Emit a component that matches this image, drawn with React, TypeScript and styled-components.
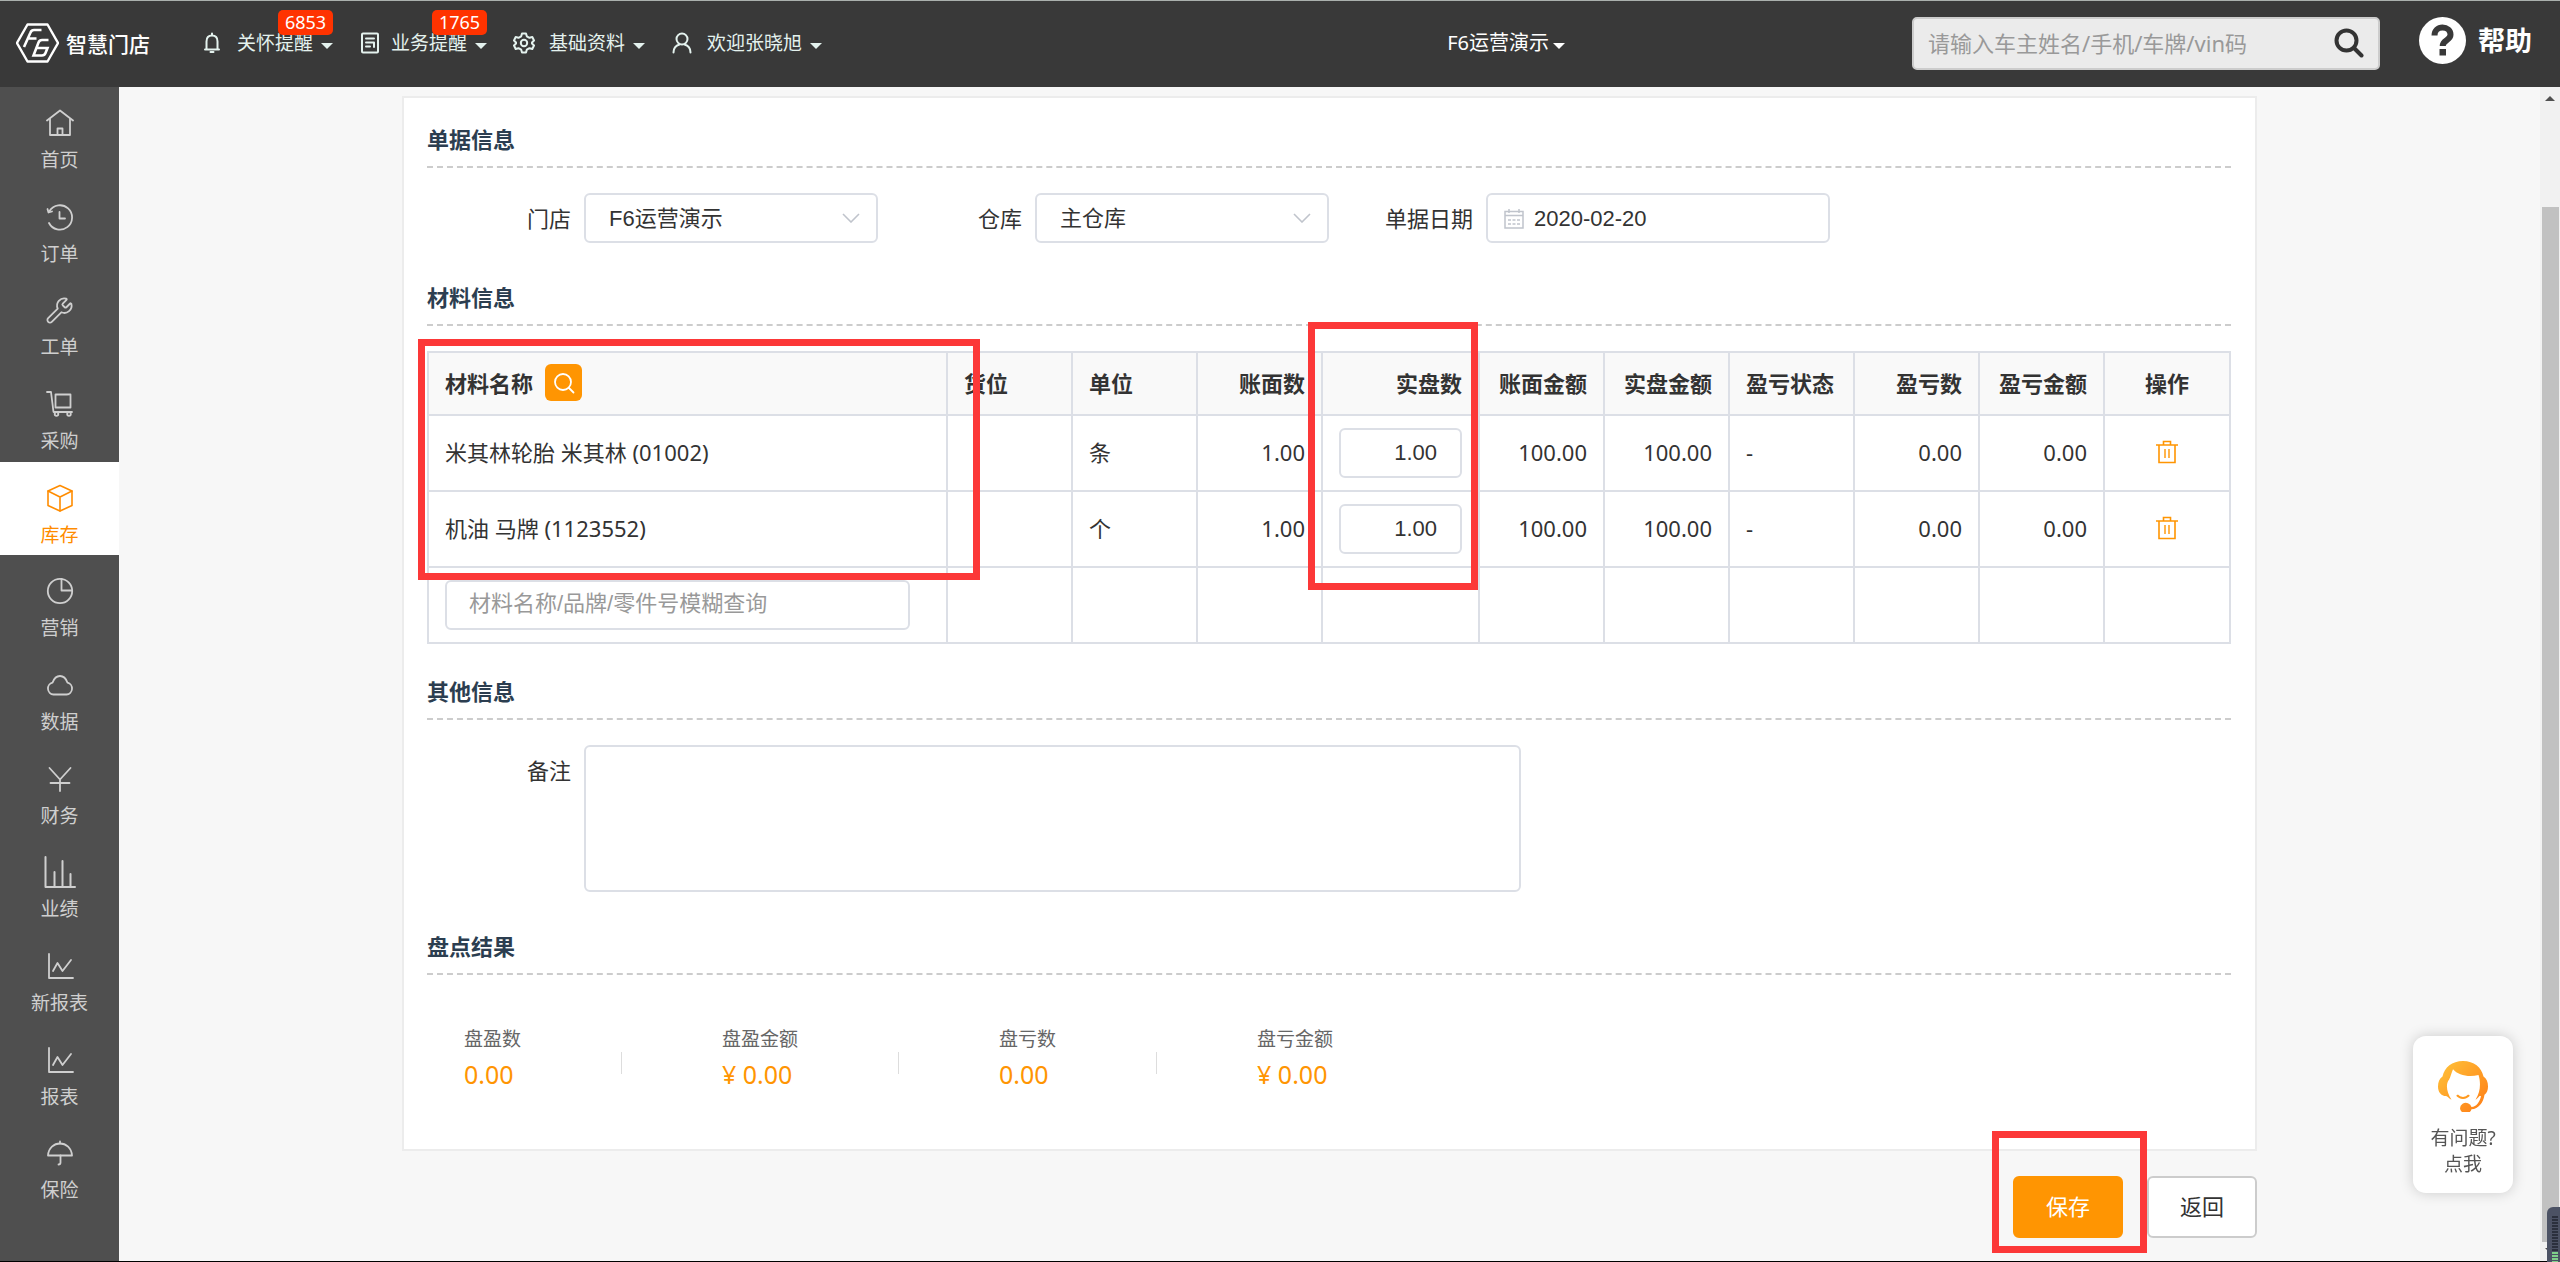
import React from "react";
import styled, { createGlobalStyle, css } from "styled-components";
import { Wrench } from "lucide-react";

const SANS = `"Noto Sans", "Noto Sans CJK SC", sans-serif`;
const ARIAL = `"Liberation Sans", "Noto Sans CJK SC", sans-serif`;
const ORANGE = "#ff9502";
const LINE = "#dcdfe6";

const GlobalStyle = createGlobalStyle`
  *, *::before, *::after { box-sizing: border-box; }
  body { margin: 0; background: #f7f7f7; overflow: hidden; }
  button, input, select, textarea { font: inherit; color: inherit; margin: 0; }
  svg { display: block; flex: none; }
`;

const Shell = styled.div`
  display: flex;
  flex-direction: column;
  height: 100vh;
  border-top: 1px solid #aab0ad;
  border-bottom: 1px solid #000;
  background: #f7f7f7;
  font-family: ${SANS};
  font-size: 22px;
  line-height: 32px;
  color: #333;
`;

/* ---------- top bar ---------- */

const TopBar = styled.header`
  display: flex;
  align-items: center;
  flex: none;
  height: 86px;
  padding: 0 28px 2px 16px;
  background: #393939;
  color: #fff;
`;

const Brand = styled.a`
  display: flex;
  align-items: center;
  gap: 7px;
  width: 185px;
  color: #fff;
  text-decoration: none;
  font-size: 21px;
  font-weight: 500;
  font-family: "Noto Sans CJK SC", sans-serif;
`;

const TopNav = styled.nav`
  display: flex;
  align-items: center;
  gap: 26px;
  flex: 1;
`;

const TopNavButton = styled.button<{ $tight?: boolean }>`
  display: flex;
  align-items: center;
  gap: 8px;
  padding: 0;
  border: 0;
  background: none;
  color: #e4f2ee;
  font-size: 19px;
  line-height: 28px;
  position: relative;
  cursor: pointer;

  > svg {
    margin-right: ${(p) => (p.$tight ? "2px" : "6px")};
  }
`;

const Caret = styled.span`
  margin-top: 6px;
  border: 6px solid transparent;
  border-top-color: currentColor;
  border-bottom: 0;
`;

const CountBadge = styled.span`
  position: absolute;
  right: 0;
  bottom: 22px;
  width: 55px;
  border-radius: 5px;
  background: #ff3300;
  color: #fff;
  font-size: 18px;
  line-height: 25px;
  text-align: center;
`;

const StoreSwitch = styled.button`
  display: flex;
  align-items: center;
  gap: 4px;
  margin-right: 347px;
  padding: 0;
  border: 0;
  background: none;
  color: #fff;
  font-size: 20px;
  line-height: 28px;
  cursor: pointer;
`;

const SearchBox = styled.form`
  display: flex;
  align-items: center;
  width: 468px;
  height: 53px;
  padding: 0 14px;
  border: 2px solid #ccc;
  border-radius: 5px;
  background: #ebebeb;
  color: #333;
`;

const SearchInput = styled.input`
  flex: 1;
  min-width: 0;
  padding: 0;
  border: 0;
  outline: 0;
  background: none;
  &::placeholder { color: #999; opacity: 1; }
`;

const IconButton = styled.button`
  padding: 0;
  border: 0;
  background: none;
  color: inherit;
  cursor: pointer;
`;

const HelpLink = styled.a`
  display: flex;
  align-items: center;
  gap: 12px;
  margin-left: 39px;
  padding-bottom: 5px;
  color: #fff;
  font-size: 27px;
  font-weight: 700;
  text-decoration: none;
`;

/* ---------- side menu ---------- */

const Body = styled.div`
  display: flex;
  flex: 1;
  min-height: 0;
`;

const SideMenu = styled.nav`
  display: flex;
  flex-direction: column;
  flex: none;
  width: 119px;
  padding-bottom: 50px;
  background: #4f4f4f;
`;

const SideLink = styled.a<{ $active?: boolean }>`
  display: flex;
  flex-direction: column;
  align-items: center;
  gap: 9px;
  flex: 1;
  padding-top: 22px;
  background: ${(p) => (p.$active ? "#fff" : "none")};
  color: ${(p) => (p.$active ? "#ff8c00" : "#cfcfcf")};
  font-size: 19px;
  line-height: 28px;
  text-decoration: none;
`;

const SideIcon = styled.span`
  display: flex;
  align-items: center;
  justify-content: center;
  height: 28px;
`;

/* ---------- form card ---------- */

const Main = styled.main`
  flex: 1;
  min-width: 0;
  padding: 9px 283px 0;
  overflow: hidden;
`;

const Card = styled.div`
  padding: 26px 24px 56px 23px;
  border: 2px solid #ececec;
  background: #fff;
`;

const Section = styled.section<{ $close?: boolean }>`
  margin-bottom: ${(p) => (p.$close ? "32px" : "39px")};
  &:last-child { margin-bottom: 0; }
`;

const SectionTitle = styled.h2`
  margin: 0 0 25px;
  padding-bottom: 12px;
  border-bottom: 2px dashed #ccc;
  color: #2c3e50;
  font-size: 22px;
  line-height: 30px;
  font-weight: 700;
`;

const FieldRow = styled.div`
  display: flex;
  flex-wrap: wrap;
`;

const FieldLabel = styled.label`
  width: 144px;
  margin-right: 13px;
  line-height: 50px;
  text-align: right;
`;

const control = css`
  height: 50px;
  border: 2px solid ${LINE};
  border-radius: 6px;
  background: #fff;
  outline: 0;
`;

const SelectWrap = styled.span`
  display: grid;
  align-items: center;
  width: 294px;
  > * { grid-area: 1 / 1; }
  > svg { justify-self: end; margin-right: 18px; pointer-events: none; }
`;

const Select = styled.select`
  ${control}
  appearance: none;
  width: 100%;
  padding: 2px 40px 0 23px;
  font-family: ${ARIAL};
`;

const DateWrap = styled.span`
  display: flex;
  align-items: center;
  gap: 10px;
  width: 344px;
  padding: 2px 0 0 16px;
  ${control}
`;

const DateInput = styled.input`
  flex: 1;
  min-width: 0;
  padding: 0;
  border: 0;
  outline: 0;
  background: none;
  font-family: ${ARIAL};
`;

const Remark = styled.textarea`
  width: 937px;
  height: 147px;
  padding: 8px 22px;
  border: 2px solid ${LINE};
  border-radius: 6px;
  outline: 0;
  resize: none;
`;

/* ---------- material table ---------- */

const TableWrap = styled.div`
  position: relative;
`;

const Table = styled.table`
  width: 100%;
  table-layout: fixed;
  border-collapse: separate;
  border-spacing: 0;
  border-left: 2px solid ${LINE};
  border-top: 2px solid ${LINE};
`;

type Align = "left" | "right" | "center";

const Col = styled.col<{ $w?: number }>`
  width: ${(p) => (p.$w ? `${p.$w}px` : "auto")};
`;

const cell = css<{ $align?: Align }>`
  padding: 0 16px 2px;
  border-right: 2px solid ${LINE};
  border-bottom: 2px solid ${LINE};
  text-align: ${(p) => p.$align || "left"};
  white-space: nowrap;
`;

const Th = styled.th<{ $align?: Align }>`
  ${cell}
  height: 63px;
  background: #f9f9f9;
  font-weight: 700;
`;

const Td = styled.td<{ $align?: Align; $control?: boolean }>`
  ${cell}
  height: 76px;
  ${(p) => p.$control && "padding-bottom: 0;"}
`;

const HeadCell = styled.span`
  display: flex;
  align-items: center;
  gap: 12px;
`;

const PickButton = styled.button`
  display: flex;
  align-items: center;
  justify-content: center;
  width: 37px;
  height: 37px;
  padding: 0;
  border: 0;
  border-radius: 6px;
  background: ${ORANGE};
  color: #fff;
  cursor: pointer;
`;

const CountInput = styled.input`
  ${control}
  display: block;
  width: 100%;
  padding: 0 23px 0 8px;
  font-family: ${ARIAL};
  text-align: right;
`;

const MaterialInput = styled.input`
  ${control}
  display: block;
  width: calc(100% - 20px);
  padding: 0 22px 2px;
  font-family: ${ARIAL};
  &::placeholder { color: #999; opacity: 1; }
`;

const DeleteButton = styled(IconButton)`
  display: block;
  margin: 0 auto;
  color: ${ORANGE};
`;

const Mark = styled.span<{ $x: number; $y: number; $w: number; $h: number }>`
  position: absolute;
  left: ${(p) => p.$x}px;
  top: ${(p) => p.$y}px;
  width: ${(p) => p.$w}px;
  height: ${(p) => p.$h}px;
  border: 7px solid #fc3838;
  pointer-events: none;
`;

/* ---------- totals ---------- */

const Totals = styled.dl`
  display: flex;
  align-items: center;
  margin: 0;
  padding: 25px 0 0 37px;
`;

const Total = styled.div`
  padding-right: 100px;
`;

const TotalRule = styled.span`
  width: 1px;
  height: 22px;
  margin: 8px 100px 0 0;
  background: #ddd;
`;

const TotalName = styled.dt`
  color: #666;
  font-size: 19px;
  line-height: 28px;
`;

const TotalValue = styled.dd`
  margin: 4px 0 2px;
  color: ${ORANGE};
  font-size: 25px;
  line-height: 34px;
`;

/* ---------- actions ---------- */

const Actions = styled.div`
  display: flex;
  justify-content: flex-end;
  gap: 24px;
  padding-top: 25px;
`;

const SaveWrap = styled.span`
  position: relative;
`;

const Action = styled.button<{ $primary?: boolean }>`
  display: block;
  width: 110px;
  height: 62px;
  padding: 0 0 2px;
  border: 2px solid ${(p) => (p.$primary ? ORANGE : "#ccc")};
  border-radius: 6px;
  background: ${(p) => (p.$primary ? ORANGE : "#fff")};
  color: ${(p) => (p.$primary ? "#fff" : "#333")};
  cursor: pointer;
`;

/* ---------- right edge ---------- */

const ScrollTrack = styled.div`
  display: flex;
  flex-direction: column;
  align-items: center;
  justify-content: space-between;
  flex: none;
  width: 20px;
  padding: 9px 0 8px;
  background: #f1f1f1;
`;

const ScrollArrow = styled.span<{ $down?: boolean }>`
  border: 5px solid transparent;
  ${(p) =>
    p.$down
      ? "border-top-color: #505050; border-bottom: 0;"
      : "border-bottom-color: #505050; border-top: 0;"}
`;

const ScrollThumb = styled.span`
  flex: 1;
  width: 17px;
  margin: 106px 0 6px;
  background: #c1c1c1;
`;

const EdgeMeter = styled.div`
  position: fixed;
  right: 0;
  bottom: 0;
  width: 13px;
  height: 55px;
  padding: 9px 2px 0 5px;
  border-radius: 6px 0 0 0;
  background: #4c5264;
`;

const MeterBars = styled.div`
  height: 46px;
  background:
    repeating-linear-gradient(transparent 0 2px, #4c5264 2px 3px),
    linear-gradient(#2b303d 0 36px, #7fd08a 36px);
`;

const ChatCard = styled.button`
  position: fixed;
  right: 47px;
  bottom: 69px;
  display: flex;
  flex-direction: column;
  align-items: center;
  width: 100px;
  height: 157px;
  padding: 25px 0 0;
  border: 0;
  border-radius: 13px;
  background: #fff;
  box-shadow: 0 0 14px rgba(0, 0, 0, 0.18);
  color: #555;
  font-size: 19px;
  line-height: 26px;
  cursor: pointer;
`;

const ChatText = styled.span`
  margin-top: 13px;
`;

/* ---------- icons ---------- */

const Stroke: React.FC<{
  size?: number;
  box?: number;
  w?: number;
  children: React.ReactNode;
}> = ({ size = 28, box = 28, w = 1.8, children }) => (
  <svg
    width={size}
    height={size}
    viewBox={`0 0 ${box} ${box}`}
    fill="none"
    stroke="currentColor"
    strokeWidth={w}
    strokeLinecap="round"
    strokeLinejoin="round"
    aria-hidden="true"
  >
    {children}
  </svg>
);

const ChartLine = () => (
  <Stroke>
    <path d="M3 2V26H27" />
    <path d="M7 19L11.5 11L16.5 19L25 8" />
  </Stroke>
);

const sideItems: { name: string; icon: React.ReactNode; active?: boolean }[] = [
  {
    name: "首页",
    icon: (
      <Stroke>
        <path d="M1 11.5L14 1.5L27 11.5" />
        <path d="M4 10V26H24V10" />
        <path d="M11.5 26V19.5H16.5V26" />
      </Stroke>
    ),
  },
  {
    name: "订单",
    icon: (
      <Stroke>
        <path d="M3.5 8A12.2 12.2 0 1 1 3 20" />
        <path d="M1.5 6L2.5 9.5L6 8.5" />
        <path d="M13.5 9V15.5H19" />
      </Stroke>
    ),
  },
  { name: "工单", icon: <Wrench size={29} strokeWidth={1.5} /> },
  {
    name: "采购",
    icon: (
      <Stroke>
        <path d="M1 2H5L7.500 22H26" />
        <rect x="9.500" y="4.500" width="15" height="13" />
        <circle cx="10.500" cy="24" r="1.800" />
        <circle cx="23" cy="24" r="1.800" />
      </Stroke>
    ),
  },
  {
    name: "库存",
    active: true,
    icon: (
      <Stroke w={1.6}>
        <path d="M14 1.500L26 7V21.500L14 27L2 21.500V7Z" />
        <path d="M2 7L14 13L26 7M14 13V27" />
      </Stroke>
    ),
  },
  {
    name: "营销",
    icon: (
      <Stroke>
        <circle cx="14" cy="14" r="12.200" />
        <path d="M15.500 2V13.500H26" />
      </Stroke>
    ),
  },
  {
    name: "数据",
    icon: (
      <Stroke>
        <path d="M7.500 23.500A6 6 0 0 1 6.500 11.700C8 7.500 10.500 5 14 5C17.500 5 20 7.500 21.500 11.700A6 6 0 0 1 20.500 23.500Z" />
      </Stroke>
    ),
  },
  {
    name: "财务",
    icon: (
      <Stroke>
        <path d="M3.500 3L14 14.500L24.500 3M14 14.500V26M4.500 18H23.500" />
      </Stroke>
    ),
  },
  {
    name: "业绩",
    icon: (
      <Stroke size={32} box={32} w={2}>
        <path d="M1.500 1V31H31M10.500 16V30M18.500 5V30M26.500 18V30" />
      </Stroke>
    ),
  },
  { name: "新报表", icon: <ChartLine /> },
  { name: "报表", icon: <ChartLine /> },
  {
    name: "保险",
    icon: (
      <Stroke>
        <path d="M2 16.500C2.500 9 8 4.500 14 4.500S25.500 9 26 16.500Z" />
        <path d="M14 2.500V4.500M14.500 16.500V23.500Q14.500 25.500 12.500 25.500" />
      </Stroke>
    ),
  },
];

const LogoMark = () => (
  <svg width="43" height="40" viewBox="0 0 43 40" fill="none" stroke="#fff" aria-hidden="true">
    <path d="M11.500 1.500H31.500L42 20L31.500 38.500H11.500L1 20Z" strokeWidth="2.400" strokeLinejoin="round" />
    <path d="M8 24L14.500 9.500Q15.500 7 18 7H25.500M12.500 15.500H20.500" strokeWidth="2.600" />
    <path d="M32.500 17H26Q23.500 17 22.500 19.500L17.500 32.500H26Q28.500 32.500 29.500 30L31.500 25H20.500" strokeWidth="2.600" />
  </svg>
);

const BellIcon = () => (
  <Stroke size={22} box={22} w={2}>
    <path d="M5.500 17V9.500C5.500 5.500 8 3.500 11 3.500S16.500 5.500 16.500 9.500V17M4 17.500H18M11 3V1.500M9.500 20H12.500" />
  </Stroke>
);

const ListIcon = () => (
  <Stroke size={22} box={22} w={2}>
    <rect x="3" y="1.500" width="16" height="19" rx="1" />
    <path d="M7 6.500H15M7 10.500H15M7 14.500H11M15 10.500V15" />
  </Stroke>
);

const GearIcon = () => (
  <Stroke size={22} box={22} w={2}>
    <path d="M9 1.500H13L13.800 4.300L16.500 5.800L19.300 5L21 8.500L19 10.500V11.500L21 13.500L19.300 17L16.500 16.200L13.800 17.700L13 20.500H9L8.200 17.700L5.500 16.200L2.700 17L1 13.500L3 11.500V10.500L1 8.500L2.700 5L5.500 5.800L8.200 4.300Z" />
    <circle cx="11" cy="11" r="3.200" />
  </Stroke>
);

const UserIcon = () => (
  <Stroke size={22} box={22} w={2}>
    <circle cx="11" cy="7" r="5.500" />
    <path d="M2.500 20.500C2.500 16 5 13.500 8.500 12.500M19.500 20.500C19.500 16 17 13.500 13.500 12.500" />
  </Stroke>
);

const Chevron = () => (
  <svg width="18" height="10" viewBox="0 0 18 10" fill="none" stroke="#c0c4cc" strokeWidth="1.600" aria-hidden="true">
    <path d="M1 1L9 9L17 1" />
  </svg>
);

const CalendarIcon = () => (
  <svg width="20" height="20" viewBox="0 0 20 20" fill="none" stroke="#c0c4cc" strokeWidth="1.500" aria-hidden="true">
    <path d="M1 2.500H19V19H1ZM1 6.500H19M5 0V4M15 0V4" />
    <path d="M4 11H16M4 15H16" strokeDasharray="3 1.500" />
  </svg>
);

const TrashIcon = () => (
  <svg width="22" height="24" viewBox="0 0 22 24" fill="none" stroke="currentColor" strokeWidth="1.600" aria-hidden="true">
    <path d="M0 5H22M7.500 5V1.500H14.500V5M3 5V22.500H19V5" />
    <path d="M9 9V18M13 9V18" strokeWidth="1.400" />
  </svg>
);

const HelpMark = () => (
  <svg width="47" height="47" viewBox="0 0 47 47" aria-hidden="true">
    <circle cx="23.500" cy="23.500" r="23.500" fill="#fff" />
    <path d="M15.500 18.500C15.500 13.500 19 10.500 23.500 10.500S31.500 13.500 31.500 17.800C31.500 23.500 23.700 23 23.700 29" fill="none" stroke="#393939" strokeWidth="6" />
    <rect x="20.500" y="32" width="6.500" height="6.500" fill="#393939" />
  </svg>
);

const AgentIcon = () => (
  <svg width="50" height="51" viewBox="0 0 50 56" preserveAspectRatio="none" aria-hidden="true">
    <defs>
      <linearGradient id="agent" x1="0" y1="0" x2="1" y2="1">
        <stop offset="0" stopColor="#ffc43a" />
        <stop offset="1" stopColor="#ff7a14" />
      </linearGradient>
    </defs>
    <path
      fill="url(#agent)"
      d="M25 0C14 0 6.500 7 4.500 17C1.500 19 0 23 0 28C0 34 3 38.500 8 38.500C9.500 38.500 11 41.500 13.500 42.500C8.500 34 7.500 25 11 20.500C12.500 17.500 13.500 13 15 9C20 15.500 30 18 40.500 15.500C43 24 42.500 34 37.500 42.500C39 41.500 40.500 40 41.500 38.500H43C42 44.500 38.500 50.500 33.500 50.500A5.800 5.800 0 1 0 33.500 53C40.500 52.500 45.500 45.500 46.500 37C49 35 50 32 50 28C50 23 48.500 19 45.500 17C43.500 7 36 0 25 0Z"
    />
    <path d="M19 37.500C22 41.500 28 41.500 31 37.500" fill="none" stroke="#ff9a1f" strokeWidth="2.200" />
  </svg>
);

/* ---------- data ---------- */

const topItems = [
  { name: "关怀提醒", icon: <BellIcon />, count: "6853" },
  { name: "业务提醒", icon: <ListIcon />, count: "1765", tight: true },
  { name: "基础资料", icon: <GearIcon /> },
  { name: "欢迎张晓旭", icon: <UserIcon /> },
];

const columns: { name: string; width?: number; align?: Align }[] = [
  { name: "材料名称" },
  { name: "货位", width: 125 },
  { name: "单位", width: 125 },
  { name: "账面数", width: 125, align: "right" },
  { name: "实盘数", width: 157, align: "right" },
  { name: "账面金额", width: 125, align: "right" },
  { name: "实盘金额", width: 125, align: "right" },
  { name: "盈亏状态", width: 125 },
  { name: "盈亏数", width: 125, align: "right" },
  { name: "盈亏金额", width: 125, align: "right" },
  { name: "操作", width: 126, align: "center" },
];

const materials = [
  { name: "米其林轮胎 米其林 (01002)", unit: "条" },
  { name: "机油 马牌 (1123552)", unit: "个" },
];

const totals = [
  { name: "盘盈数", value: "0.00" },
  { name: "盘盈金额", value: "¥ 0.00" },
  { name: "盘亏数", value: "0.00" },
  { name: "盘亏金额", value: "¥ 0.00" },
];

export default function App() {
  return (
    <Shell>
      <GlobalStyle />
      <TopBar>
        <Brand href="#">
          <LogoMark />
          智慧门店
        </Brand>
        <TopNav>
          {topItems.map((item) => (
            <TopNavButton key={item.name} type="button" $tight={item.tight}>
              {item.icon}
              {item.name}
              <Caret />
              {item.count && <CountBadge>{item.count}</CountBadge>}
            </TopNavButton>
          ))}
        </TopNav>
        <StoreSwitch type="button">
          F6运营演示
          <Caret />
        </StoreSwitch>
        <SearchBox onSubmit={(e) => e.preventDefault()}>
          <SearchInput
            aria-label="搜索"
            placeholder="请输入车主姓名/手机/车牌/vin码"
          />
          <IconButton type="submit" aria-label="搜索">
            <Stroke size={30} box={30} w={4}>
              <circle cx="12.500" cy="12.500" r="10" />
              <path d="M20 20L27.500 27.500" />
            </Stroke>
          </IconButton>
        </SearchBox>
        <HelpLink href="#help">
          <HelpMark />
          帮助
        </HelpLink>
      </TopBar>

      <Body>
        <SideMenu>
          {sideItems.map((item) => (
            <SideLink key={item.name} href="#" $active={item.active}>
              <SideIcon>{item.icon}</SideIcon>
              {item.name}
            </SideLink>
          ))}
        </SideMenu>

        <Main>
          <Card>
            <Section>
              <SectionTitle>单据信息</SectionTitle>
              <FieldRow>
                <FieldLabel htmlFor="store">门店</FieldLabel>
                <SelectWrap>
                  <Select id="store">
                    <option>F6运营演示</option>
                  </Select>
                  <Chevron />
                </SelectWrap>
                <FieldLabel htmlFor="depot">仓库</FieldLabel>
                <SelectWrap>
                  <Select id="depot">
                    <option>主仓库</option>
                  </Select>
                  <Chevron />
                </SelectWrap>
                <FieldLabel htmlFor="date">单据日期</FieldLabel>
                <DateWrap>
                  <CalendarIcon />
                  <DateInput id="date" defaultValue="2020-02-20" />
                </DateWrap>
              </FieldRow>
            </Section>

            <Section $close>
              <SectionTitle>材料信息</SectionTitle>
              <TableWrap>
                <Table>
                  <colgroup>
                    {columns.map((c) => (
                      <Col key={c.name} $w={c.width} />
                    ))}
                  </colgroup>
                  <thead>
                    <tr>
                      {columns.map((c, i) => (
                        <Th key={c.name} $align={c.align}>
                          {i === 0 ? (
                            <HeadCell>
                              {c.name}
                              <PickButton type="button" aria-label="选择材料">
                                <Stroke size={22} box={22} w={1.8}>
                                  <circle cx="10" cy="10" r="8" />
                                  <path d="M16 16L20.500 20.500" />
                                </Stroke>
                              </PickButton>
                            </HeadCell>
                          ) : (
                            c.name
                          )}
                        </Th>
                      ))}
                    </tr>
                  </thead>
                  <tbody>
                    {materials.map((m) => (
                      <tr key={m.name}>
                        <Td>{m.name}</Td>
                        <Td />
                        <Td>{m.unit}</Td>
                        <Td $align="right">1.00</Td>
                        <Td $control>
                          <CountInput aria-label="实盘数" defaultValue="1.00" />
                        </Td>
                        <Td $align="right">100.00</Td>
                        <Td $align="right">100.00</Td>
                        <Td>-</Td>
                        <Td $align="right">0.00</Td>
                        <Td $align="right">0.00</Td>
                        <Td>
                          <DeleteButton type="button" aria-label="删除">
                            <TrashIcon />
                          </DeleteButton>
                        </Td>
                      </tr>
                    ))}
                    <tr>
                      <Td $control>
                        <MaterialInput
                          aria-label="材料名称"
                          placeholder="材料名称/品牌/零件号模糊查询"
                        />
                      </Td>
                      {columns.slice(1).map((c) => (
                        <Td key={c.name} />
                      ))}
                    </tr>
                  </tbody>
                </Table>
                <Mark $x={-9} $y={-12} $w={562} $h={241} />
                <Mark $x={881} $y={-29} $w={170} $h={268} />
              </TableWrap>
            </Section>

            <Section>
              <SectionTitle>其他信息</SectionTitle>
              <FieldRow>
                <FieldLabel htmlFor="remark">备注</FieldLabel>
                <Remark id="remark" />
              </FieldRow>
            </Section>

            <Section>
              <SectionTitle>盘点结果</SectionTitle>
              <Totals>
                {totals.map((t, i) => (
                  <React.Fragment key={t.name}>
                    {i > 0 && <TotalRule />}
                    <Total>
                      <TotalName>{t.name}</TotalName>
                      <TotalValue>{t.value}</TotalValue>
                    </Total>
                  </React.Fragment>
                ))}
              </Totals>
            </Section>
          </Card>

          <Actions>
            <SaveWrap>
              <Action type="button" $primary>
                保存
              </Action>
              <Mark $x={-21} $y={-45} $w={155} $h={122} />
            </SaveWrap>
            <Action type="button">返回</Action>
          </Actions>
        </Main>

        <ScrollTrack>
          <ScrollArrow />
          <ScrollThumb />
          <ScrollArrow $down />
        </ScrollTrack>
      </Body>

      <ChatCard type="button">
        <AgentIcon />
        <ChatText>
          有问题?
          <br />
          点我
        </ChatText>
      </ChatCard>
      <EdgeMeter>
        <MeterBars />
      </EdgeMeter>
    </Shell>
  );
}
